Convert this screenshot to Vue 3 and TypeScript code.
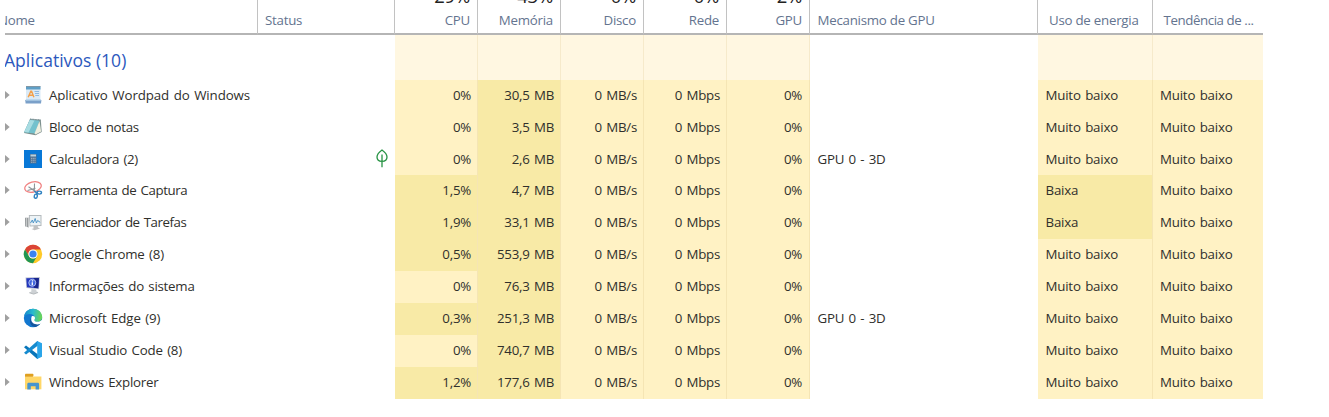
<script setup lang="ts">
interface Column {
  key: string
  label: string
  total?: string
}

interface Process {
  name: string
  icon: string
  cpu: string
  mem: string
  tracking: number
  engine?: string
  power?: string
  eco?: boolean
}

const columns: Column[] = [
  { key: 'name', label: 'Nome' },
  { key: 'status', label: 'Status' },
  { key: 'cpu', label: 'CPU', total: '29%' },
  { key: 'mem', label: 'Memória', total: '43%' },
  { key: 'disk', label: 'Disco', total: '0%' },
  { key: 'net', label: 'Rede', total: '0%' },
  { key: 'gpu', label: 'GPU', total: '2%' },
  { key: 'engine', label: 'Mecanismo de GPU' },
  { key: 'power', label: 'Uso de energia' },
  { key: 'trend', label: 'Tendência de ...' },
]

const processes: Process[] = [
  { name: 'Aplicativo Wordpad do Windows', icon: 'wordpad', cpu: '0%', mem: '30,5 MB', tracking: -0.1 },
  { name: 'Bloco de notas', icon: 'notepad', cpu: '0%', mem: '3,5 MB', tracking: -0.28 },
  { name: 'Calculadora (2)', icon: 'calc', cpu: '0%', mem: '2,6 MB', tracking: -0.3, engine: 'GPU 0 - 3D', eco: true },
  { name: 'Ferramenta de Captura', icon: 'snip', cpu: '1,5%', mem: '4,7 MB', tracking: -0.43, power: 'Baixa' },
  { name: 'Gerenciador de Tarefas', icon: 'taskmgr', cpu: '1,9%', mem: '33,1 MB', tracking: -0.47, power: 'Baixa' },
  { name: 'Google Chrome (8)', icon: 'chrome', cpu: '0,5%', mem: '553,9 MB', tracking: -0.19 },
  { name: 'Informações do sistema', icon: 'sysinfo', cpu: '0%', mem: '76,3 MB', tracking: -0.25 },
  { name: 'Microsoft Edge (9)', icon: 'edge', cpu: '0,3%', mem: '251,3 MB', tracking: -0.13 },
  { name: 'Visual Studio Code (8)', icon: 'vscode', cpu: '0%', mem: '740,7 MB', tracking: -0.21 },
  { name: 'Windows Explorer', icon: 'explorer', cpu: '1,2%', mem: '177,6 MB', tracking: -0.25 },
]
processes[7].engine = 'GPU 0 - 3D'
</script>

<template>
  <main class="manager">
    <div class="row header">
      <div v-for="c in columns" :key="c.key" class="cell head" :class="c.key">
        <span v-if="c.total" class="total">{{ c.total }}</span>
        <span class="label">{{ c.label }}</span>
      </div>
    </div>
    <div class="row group">
      <div v-for="c in columns" :key="c.key" class="cell" :class="c.key">
        <span v-if="c.key === 'name'" class="title">Aplicativos (10)</span>
      </div>
    </div>
    <div v-for="p in processes" :key="p.name" class="row item">
      <div class="cell name">
        <svg class="arrow" viewBox="0 0 5 8"><path d="M0 0 4.700 4 0 8Z" fill="#a0a0a0" /></svg>
        <svg class="icon" viewBox="0 0 20 20">
          <g v-if="p.icon === 'wordpad'">
            <path d="M3 2h14.500v13H3z" fill="#dbeaf6" />
            <path d="M3 1.500h14.500v3H3z" fill="#5f9fc6" />
            <path d="M3 1h14.500v1H3z" fill="#8197a5" />
            <path d="M2.200 15h16.200l-.4 3.500H2.600z" fill="#7ba0c9" />
            <path d="M2.800 14h15v1.600h-15z" fill="#bdd8ee" />
            <path d="m5.200 12.300 2.600-6h.8l2.300 6M6.200 10.300h3.800" fill="none" stroke="#f3a04a" stroke-width="1.400" />
            <path d="M11.500 6.500h4.500M12 8.500h4M12.300 10.500H16" stroke="#86b4e0" stroke-width=".9" />
          </g>
          <g v-else-if="p.icon === 'notepad'">
            <path d="m7 2 10.800.8.900 12.200-6.200 3.200L1 16z" fill="#7b8e8c" />
            <path d="m7 2.500 9.500 1-4.500 13L1 15.200z" fill="#73c1cd" />
            <path d="m6.800 3 4.700.4L5.500 15.500 1.300 15z" fill="#a8dce2" />
            <path d="m16.500 4 1.600 10.500-5.600 3-1-1z" fill="#efefdf" />
            <path d="m7 2.100 10.500 1" stroke="#7c9398" stroke-width="1.300" stroke-dasharray="1 .6" />
          </g>
          <g v-else-if="p.icon === 'calc'">
            <path d="M1 1h18v18H1z" fill="#0878d7" />
            <path d="M7 5h6.500v9.500H7z" fill="#4c6f91" />
            <path d="M7.500 5.500h5.500v2h-5.500z" fill="#b6d2df" />
            <path d="M8 9.300h5M8 11.200h5M8 13.200h5" stroke="#a9b9c7" stroke-width="1" stroke-dasharray="1.200 .5" />
          </g>
          <g v-else-if="p.icon === 'snip'" fill="none">
            <ellipse cx="10" cy="7" rx="8.500" ry="5" transform="rotate(-15 10 7)" stroke="#f08080" stroke-width="1.300" />
            <path d="m5.500 6.800 8 5.400M11.500 3.500 11.300 12M4.500 10.500l8-2.200" stroke="#8e9599" stroke-width="1.100" />
            <ellipse cx="16.300" cy="12.600" rx="2.200" ry="1.500" stroke="#3183c2" stroke-width="1.400" />
            <ellipse cx="12.800" cy="16.200" rx="1.500" ry="2.100" transform="rotate(12 12.800 16.200)" stroke="#3183c2" stroke-width="1.400" />
            <path d="m11.500 11 2.500 2.500-.7 1.500" stroke="#3183c2" stroke-width="1.400" />
          </g>
          <g v-else-if="p.icon === 'taskmgr'">
            <path d="M2 5.500h4v10.300l-3-1z" fill="#c5c8c9" />
            <path d="M2.500 6v8.500M4.500 6v9" stroke="#8c9193" stroke-width=".8" />
            <path d="M5.800 3h12.700v10.900l-12 .6z" fill="#b4babd" />
            <path d="M6.800 4h10.700v8.900l-10 .6z" fill="#edf3f6" />
            <path d="M7.500 11 9.300 8l1 3 1.900-4.500 1.200 4.500 1.200-2.500 2.600 1.800" fill="none" stroke="#5198c9" stroke-width="1" />
            <path d="m10.500 14 4-.3.800 2 1.800.8-5.500 1.700-3.100-1.200 2-.6z" fill="#bfc1c2" />
          </g>
          <g v-else-if="p.icon === 'chrome'">
            <circle cx="10" cy="10" r="9.200" fill="#ffca28" />
            <path d="M2.030 5.400A9.200 9.200 0 0 1 17.970 5.400H10A4.600 4.600 0 0 0 6.020 12.300z" fill="#db4437" />
            <path d="M2.030 5.400A9.200 9.200 0 0 0 10 19.200L13.980 12.300A4.600 4.600 0 0 1 6.020 12.300z" fill="#219653" />
            <circle cx="10" cy="10" r="4.600" fill="#fff" />
            <circle cx="10" cy="10" r="3.600" fill="#3b82f1" />
          </g>
          <g v-else-if="p.icon === 'sysinfo'">
            <path d="M2.500 1.500 16.800 1l-.8 12.300L3.300 12z" fill="#b9bfd0" />
            <path d="m3.300 2.300 12.600-.4-.7 10.400L4 11.200z" fill="#2336bd" />
            <path d="m11 2 4.900-.1-.7 10.400-4.200-.5z" fill="#18258c" />
            <circle cx="9.300" cy="6.800" r="3.500" fill="#4266dd" stroke="#b9c7f4" stroke-width=".9" />
            <path d="M9.500 4.300v1.200M9.300 6.300v3" stroke="#fff" stroke-width="1.300" />
            <path d="m8.300 13 5 .4.200 2 2 .8-4.800 1.900-4.700-1.700 2.400-1z" fill="#cdd1d4" />
            <path d="m6.300 16.800 4.400 1.300 4.300-1.600" fill="none" stroke="#9ea3a7" stroke-width=".7" />
          </g>
          <g v-else-if="p.icon === 'edge'">
            <defs>
              <linearGradient id="edge-top" x1="1" y1="5" x2="18" y2="8" gradientUnits="userSpaceOnUse">
                <stop stop-color="#1687cb" /><stop offset=".5" stop-color="#28bad0" /><stop offset="1" stop-color="#66d45c" />
              </linearGradient>
            </defs>
            <circle cx="10" cy="10" r="9.200" fill="#1277cf" />
            <path d="M1 9C1.800 3.500 5.500.8 10 .8c5.500 0 9.200 4 9.200 8.200 0 3-2.200 4.800-4.900 4.800-2.300 0-3.600-.7-3.600-1.600 0-.6.900-1 .9-2.400C11.600 7.500 9.500 6 6.800 6 4 6 1.900 7.300 1 9z" fill="url(#edge-top)" />
            <path d="M8.200 9.500c-1.200 3.800 2 6.500 5.400 6.400 1.500 0 2.800-.7 3.800-1.300.4-.2.700.1.500.5-1.100 1.900-3.300 3.500-5.800 3.900-4.200-.5-6.800-5.200-3.900-9.500z" fill="#14579f" />
            <path d="M8.600 8.400c1.700-.9 3.500.1 3.400 1.800-.1 1-.8 1.300-.7 2 .2 1 1.600 1.600 3.100 1.600 1.700 0 3.500-.7 4.300-1.800l1.300.7-1.600 2.700-1.400.6c-4.100 1.400-8.300-.6-8.700-3.900-.1-1.300-.1-2.700.3-3.700z" fill="#fff" />
          </g>
          <g v-else-if="p.icon === 'vscode'">
            <path d="M1 7.200 3 5.500 15 14.500v4.500l-1-.3L1 7.200z" fill="#0875b9" />
            <path d="M1 12.800 3 14.500 15 5.500V1l-1 .3L1 12.800z" fill="#168bcf" />
            <path d="m14.200 1 4.800 2.200v13.600L14.200 19z" fill="#2aa5e9" />
          </g>
          <g v-else>
            <path d="M2 4.500h16.400v12.800H2z" fill="#ffd768" />
            <path d="M2 3c0-.7.500-1.200 1-1.200h6c1 0 1.500.4 1.500 1.200S10 4.800 9.200 4.800H2z" fill="#dfa020" />
            <path d="M4.300 17.500v-5.300c0-1 .5-1.500 1.400-1.500h9c1 0 1.400.5 1.400 1.500v5.300h-3.500v-3.200H7.800v3.200z" fill="#4795cf" />
          </g>
        </svg>
        <span class="caption" :style="{ letterSpacing: p.tracking + 'px' }">{{ p.name }}</span>
      </div>
      <div class="cell status">
        <svg v-if="p.eco" class="leaf" viewBox="0 0 12 19">
          <path d="M6 1C3.500 2.800 1 5 1 8c0 2.800 2.100 4.300 5 4.300S11 10.800 11 8c0-3-2.500-5.200-5-7zM6 5.500v12.800" fill="none" stroke="#279344" stroke-width="1.300" />
        </svg>
      </div>
      <div class="cell cpu" :class="{ warm: p.cpu !== '0%' }">{{ p.cpu }}</div>
      <div class="cell mem warm">{{ p.mem }}</div>
      <div class="cell disk">0 MB/s</div>
      <div class="cell net">0 Mbps</div>
      <div class="cell gpu">0%</div>
      <div class="cell engine">{{ p.engine }}</div>
      <div class="cell power" :class="{ warm: p.power }">{{ p.power ?? 'Muito baixo' }}</div>
      <div class="cell trend">Muito baixo</div>
    </div>
  </main>
</template>

<style>
body {
  background: #fff;
}
</style>

<style scoped>
.manager {
  box-sizing: border-box;
  width: 1263px;
  height: 417px;
  padding-left: 5px;
  overflow: hidden;
  font-family: 'Open Sans', 'Noto Sans', sans-serif;
  font-size: 13.3px;
  letter-spacing: -0.25px;
  color: #30302c;
}
.row {
  display: grid;
  grid-template-columns: 253px 137px 83px 83px 83px 83px 83px 228px 114.500px 110.500px;
  height: 31.920px;
}
.cell {
  box-sizing: border-box;
  display: flex;
  align-items: center;
  min-width: 0;
  overflow: hidden;
  white-space: nowrap;
}
.item .cell {
  padding-bottom: 1.500px;
  word-spacing: 1.200px;
}
.cpu,
.mem,
.disk,
.net,
.gpu {
  justify-content: flex-end;
  padding-right: 6px;
  background: #fff2c4;
  border-right: 1px solid #f5e5b4;
}
.gpu {
  padding-right: 7px;
}
.power,
.trend {
  padding-left: 7.500px;
  background: #fff2c4;
}
.power {
  border-right: 1px solid #f5e5b4;
}
.item .power,
.item .trend {
  letter-spacing: -0.2px;
}
.engine {
  padding-left: 7.500px;
}
.item .warm {
  background: #f8eaa6;
}

.header {
  height: 35px;
}
.head {
  flex-direction: column;
  justify-content: flex-end;
  align-items: flex-start;
  padding-bottom: 4px;
  background: #fff;
  border-right: 1px solid #c2c2c2;
  border-bottom: 2px solid #b5b5b5;
  color: #64748f;
}
.head.trend {
  border-right: 0;
  letter-spacing: -0.42px;
}
.head.cpu,
.head.mem,
.head.disk,
.head.net,
.head.gpu {
  align-items: flex-end;
  padding-right: 7px;
}
.head.power,
.head.trend {
  padding-left: 11px;
}
.head.status {
  padding-left: 7px;
}
.head .label {
  line-height: 18px;
}
.head.name .label {
  margin-left: -7px;
}
.total {
  line-height: 24px;
  margin-bottom: 3.500px;
  font-size: 18.500px;
  color: #222;
}

.group {
  height: 44.500px;
}
.group .cpu,
.group .mem,
.group .disk,
.group .net,
.group .gpu,
.group .power,
.group .trend {
  background: #fff7e1;
}
.group .cpu,
.group .mem,
.group .disk,
.group .net,
.group .gpu,
.group .power {
  border-color: #f6eacb;
}
.title {
  padding-top: 5px;
  margin-left: -1px;
  font-size: 17.500px;
  letter-spacing: 0.03px;
  color: #2c58bd;
}

.arrow {
  flex: none;
  width: 5px;
  height: 8px;
}
.icon {
  flex: none;
  width: 20px;
  height: 20px;
  margin-left: 13px;
}
.caption {
  margin-left: 6px;
}
.status {
  justify-content: flex-end;
  padding-right: 7px;
}
.leaf {
  width: 12px;
  height: 19px;
}
</style>
